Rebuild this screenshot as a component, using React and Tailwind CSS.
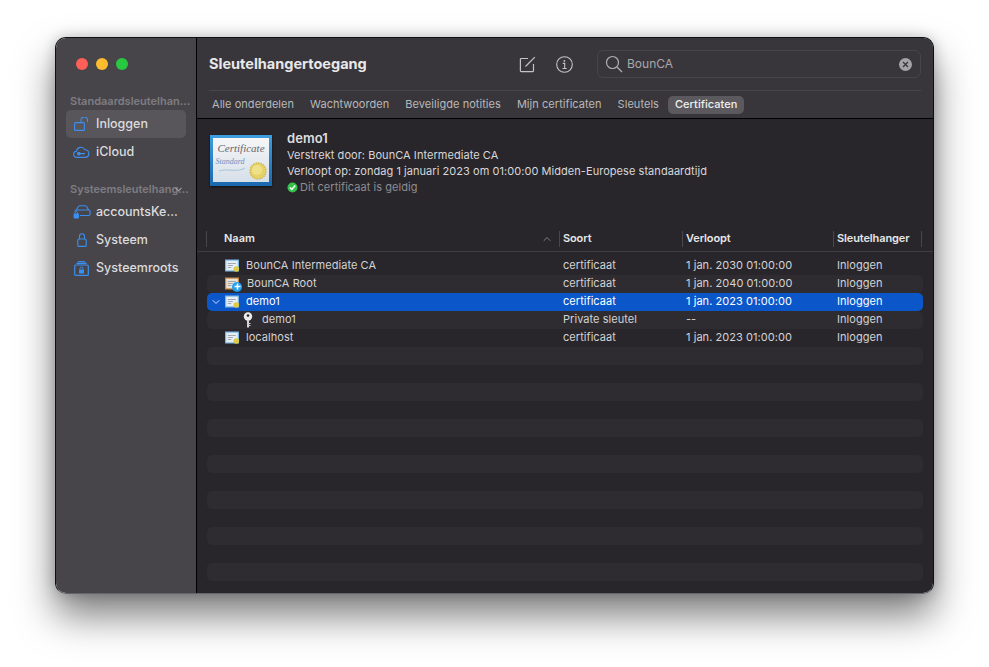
import React from 'react';
import { ChevronDown, ChevronUp } from 'lucide-react';

const tabs = ['Alle onderdelen', 'Wachtwoorden', 'Beveiligde notities', 'Mijn certificaten', 'Sleutels', 'Certificaten'];

const rows = [
  { name: 'BounCA Intermediate CA', kind: 'certificaat', expires: '1 jan. 2030 01:00:00', icon: 'cert' },
  { name: 'BounCA Root', kind: 'certificaat', expires: '1 jan. 2040 01:00:00', icon: 'root' },
  { name: 'demo1', kind: 'certificaat', expires: '1 jan. 2023 01:00:00', icon: 'cert', selected: true },
  { name: 'demo1', kind: 'Private sleutel', expires: '--', icon: 'key' },
  { name: 'localhost', kind: 'certificaat', expires: '1 jan. 2023 01:00:00', icon: 'cert' },
];

function OpenLockIcon() {
  return (
    <svg width="15" height="14" viewBox="0 0 15 14" fill="none" stroke="#3b8ff0" strokeWidth="1.1">
      <rect x="0.600" y="5.600" width="9.800" height="7.800" rx="1" />
      <path d="M7 5.600V3.200a3 3 0 0 1 6.500 0v2" />
    </svg>
  );
}

function CloudIcon() {
  return (
    <svg width="17" height="12" viewBox="0 0 17 12" fill="none" stroke="#3b8ff0" strokeWidth="1.1">
      <path d="M4 11.400a3.100 3.100 0 0 1-.5-6.200A4.400 4.400 0 0 1 11.800 3.700a3.900 3.900 0 0 1 1 7.700z" />
      <circle cx="5.800" cy="7.600" r="1.300" fill="#3b8ff0" />
      <path d="M7 7.600h5" />
    </svg>
  );
}

function CarLockIcon() {
  return (
    <svg width="18" height="14" viewBox="0 0 18 14" fill="none" stroke="#3b8ff0" strokeWidth="1.1">
      <path d="M3.500 5 5 1.900A2 2 0 0 1 6.800 0.700h5.400A2 2 0 0 1 14 1.900L15.500 5" />
      <path d="M7 10.500h8.500a1.600 1.600 0 0 0 1.600-1.600V6.600a1.600 1.600 0 0 0-1.600-1.600h-12a1.600 1.600 0 0 0-1.600 1.600" />
      <rect x="0.600" y="8.400" width="5.400" height="5" rx="1" fill="#3b8ff0" stroke="none" />
      <path d="M2 8.900V7.900a1.300 1.300 0 0 1 2.600 0v1" strokeWidth="0.900" />
    </svg>
  );
}

function LockIcon() {
  return (
    <svg width="10" height="14" viewBox="0 0 10 14" fill="none" stroke="#3b8ff0" strokeWidth="1.1">
      <rect x="0.800" y="6" width="8.400" height="7.400" rx="1" />
      <path d="M2.500 6V3.300a2.500 2.500 0 0 1 5 0V6" />
    </svg>
  );
}

function RootsIcon() {
  return (
    <svg width="15" height="15" viewBox="0 0 15 15" fill="none" stroke="#3b8ff0" strokeWidth="1.200">
      <rect x="0.700" y="4" width="13.600" height="10.400" rx="1" />
      <path d="M2.500 2.300h10" strokeWidth="1.500" />
      <path d="M4 0.600h7" strokeWidth="1" />
      <rect x="5" y="8.500" width="5" height="4" rx="0.600" fill="#3b8ff0" stroke="none" />
      <path d="M6 8.500V7.500a1.500 1.500 0 0 1 3 0v1" strokeWidth="0.900" />
    </svg>
  );
}

function SmallCert({ root }) {
  return (
    <svg width="15" height="14" viewBox="0 0 15 14">
      <rect x="0" y="0.500" width="14" height="12" fill={root ? '#c98a3e' : '#7bb6e2'} />
      <rect x="1.200" y="1.700" width="11.600" height="9.600" fill={root ? '#e8e2d8' : '#e6edf3'} />
      <path d="M2.800 4.500h8M2.800 6.500h5M2.800 8.500h3.500" stroke="#8b98a3" strokeWidth="0.800" />
      <circle cx="11.300" cy="10" r="2.800" fill="#dccc45" />
    </svg>
  );
}

function RowIcon({ type }) {
  if (type === 'key') {
    return (
      <svg width="10" height="16" viewBox="0 0 10 16">
        <circle cx="5" cy="4.500" r="4.200" fill="#ececec" />
        <circle cx="5" cy="3.600" r="1.300" fill="#2a282d" />
        <path d="M4 8h2v7.500H4zM6 11h1.500v1H6zM6 13h1.500v1H6z" fill="#d4d4d4" />
      </svg>
    );
  }
  return (
    <div className="relative h-[14px] w-[15px]">
      <SmallCert root={type === 'root'} />
      {type === 'root' && (
        <div className="absolute left-[7px] top-[5px] flex h-[10px] w-[10px] items-center justify-center rounded-full bg-[#1ea0f2]">
          <svg width="7" height="7" viewBox="0 0 7 7">
            <path d="M3.500 0.500v6M0.500 3.500h6" stroke="#fff" strokeWidth="1.600" />
          </svg>
        </div>
      )}
    </div>
  );
}

function BigCert() {
  return (
    <div className="mt-[5px] h-[51px] w-[62px] shrink-0 bg-gradient-to-b from-[#3d9ee0] to-[#1a68ae] px-[3px] pt-[3px] pb-[4px] shadow-[0_1px_2px_rgba(0,0,0,0.6)]">
      <svg width="56" height="44" viewBox="0 0 56 44" className="bg-gradient-to-b from-[#f6f6f7] to-[#d6dfe8]">
        <text x="28" y="14" textAnchor="middle" fontFamily="'Liberation Serif', serif" fontStyle="italic" fontSize="11" fill="#66666b">Certificate</text>
        <text x="17" y="26" textAnchor="middle" fontFamily="'Liberation Serif', serif" fontStyle="italic" fontSize="8" fill="#5f93c4">Standard</text>
        <path d="M6 33c8-3 18 2 26-3" stroke="#8fb3d4" strokeWidth="0.700" fill="none" />
        <circle cx="45" cy="33" r="8" fill="#e5d268" stroke="#cdb848" strokeWidth="1.400" strokeDasharray="1.500 1" />
        <circle cx="44" cy="32" r="5" fill="#efe08a" />
      </svg>
    </div>
  );
}

function SidebarItem({ icon, label, active }) {
  return (
    <div className={`flex h-[28px] items-center rounded-[5px] ${active ? 'bg-[#58565b]' : ''}`}>
      <div className="flex w-[30px] shrink-0 justify-center pl-[1px]">{icon}</div>
      <span className="text-[12.500px] font-medium text-[#dcdbdd]">{label}</span>
    </div>
  );
}

function HeaderCell({ label, className }) {
  return (
    <div className={`flex h-[16px] items-center border-l border-[#48474b] pl-[3px] text-[11px] font-semibold tracking-[-0.12px] text-[#e6e6e7] ${className}`}>
      {label}
    </div>
  );
}

function Row({ row, striped }) {
  const isKey = row.icon === 'key';
  return (
    <div className={`flex h-[18px] items-center rounded-[5px] pb-[1px] text-[11px] tracking-[0.05px] ${row.selected ? 'bg-[#0b57ca] text-white' : striped ? 'bg-[#2e2c31] text-[#d4d3d5]' : 'text-[#d4d3d5]'}`}>
      <div className="flex w-[18px] shrink-0 justify-center">
        {row.selected && <ChevronDown size={12} strokeWidth={2} className="text-[#cfe0f7]" />}
      </div>
      <div className={`flex w-[335px] shrink-0 items-center ${isKey ? 'pl-[18px]' : ''}`}>
        <div className={`flex shrink-0 ${isKey ? 'w-[19px]' : 'w-[21px]'}`}>
          <RowIcon type={row.icon} />
        </div>
        <span className={row.icon === 'root' ? 'pl-[1px]' : ''}>{row.name}</span>
      </div>
      <div className="w-[123px] shrink-0 pl-[3px]">{row.kind}</div>
      <div className="w-[151px] shrink-0 pl-[3px]">{row.expires}</div>
      <div className="pl-[3px]">Inloggen</div>
    </div>
  );
}

export default function App() {
  const stripes = Array.from({ length: 18 - rows.length });
  return (
    <div className="h-[667px] w-[989px] overflow-hidden bg-white pl-[55px] pt-[37px] font-['Inter','Liberation_Sans',sans-serif]">
      <div className="flex h-[557px] w-[879px] overflow-hidden rounded-[11px] border border-[#101012] border-b-[#666468] shadow-[0_22px_38px_rgba(0,0,0,0.5),0_0_14px_rgba(0,0,0,0.22)]">
        <aside className="flex w-[141px] shrink-0 flex-col border-r border-black bg-[#47454a] px-[10px] pt-[20px]">
          <div className="flex gap-[8px] pl-[10px]">
            <div className="h-[12px] w-[12px] rounded-full bg-[#fe5f57]" />
            <div className="h-[12px] w-[12px] rounded-full bg-[#febc2e]" />
            <div className="h-[12px] w-[12px] rounded-full bg-[#28c840]" />
          </div>
          <div className="mt-[23px] h-[16px] whitespace-nowrap pl-[4px] text-[11px] leading-[16px] font-semibold text-[#7f7d82]">Standaardsleutelhan...</div>
          <div className="mt-[1px] flex flex-col">
            <SidebarItem active icon={<OpenLockIcon />} label="Inloggen" />
            <SidebarItem icon={<CloudIcon />} label="iCloud" />
          </div>
          <div className="relative mt-[15px] h-[16px] whitespace-nowrap pl-[4px] text-[11px] leading-[16px] font-semibold text-[#7f7d82]">
            Systeemsleutelhang...
            <ChevronDown size={11} strokeWidth={2.200} className="absolute left-[107px] top-[3px] text-[#a3a1a6]" />
          </div>
          <div className="mt-[1px] flex flex-col">
            <SidebarItem icon={<CarLockIcon />} label="accountsKe..." />
            <SidebarItem icon={<LockIcon />} label="Systeem" />
            <SidebarItem icon={<RootsIcon />} label="Systeemroots" />
          </div>
        </aside>
        <main className="flex min-w-0 flex-1 flex-col bg-[#28262b]">
          <header className="flex h-[81px] shrink-0 flex-col border-b border-black bg-[#38363b] px-[12px]">
            <div className="flex h-[53px] shrink-0 items-center border-b border-[#48464b]">
              <h1 className="w-[310px] text-[14.500px] font-bold text-[#e8e8e9]">Sleutelhangertoegang</h1>
              <svg width="17" height="17" viewBox="0 0 17 17" fill="none" stroke="#c4c3c5" strokeWidth="1.200">
                <path d="M9 2.500H2.200a.8.800 0 0 0-.8.800v11.500a.8.800 0 0 0 .8.800h11.500a.8.800 0 0 0 .8-.800V8" />
                <path d="M6.500 10.500 15.800 1.200" />
              </svg>
              <svg width="17" height="17" viewBox="0 0 17 17" fill="none" stroke="#c4c3c5" strokeWidth="1.100" className="ml-[20px]">
                <circle cx="8.500" cy="8.500" r="7.800" />
                <path d="M6.800 7.400h1.900v5M6.500 12.500h4.200" />
                <circle cx="8.400" cy="4.900" r="0.900" fill="#c4c3c5" stroke="none" />
              </svg>
              <div className="ml-[24px] flex h-[28px] flex-1 items-center rounded-[6px] border border-[#47454a] pl-[7px] pr-[8px]">
                <svg width="18" height="18" viewBox="0 0 18 18" fill="none" stroke="#b0afb2" strokeWidth="1.200">
                  <circle cx="7.500" cy="7.500" r="6" />
                  <path d="M12 12l5 5" />
                </svg>
                <span className="ml-[4px] flex-1 text-[12px] text-[#a9a8ab]">BounCA</span>
                <div className="flex h-[13px] w-[13px] items-center justify-center rounded-full bg-[#a4a3a6]">
                  <svg width="7" height="7" viewBox="0 0 7 7">
                    <path d="M1 1l5 5M6 1L1 6" stroke="#38363b" strokeWidth="1.300" />
                  </svg>
                </div>
              </div>
            </div>
            <nav className="-ml-[4px] flex flex-1 items-center gap-[2px] text-[11px] tracking-[0.05px] text-[#b9b8ba]">
              {tabs.map((tab) => (
                <div
                  key={tab}
                  className={`flex h-[18px] items-center rounded-[5px] px-[7px] ${tab === 'Certificaten' ? 'bg-[#5b595e] font-medium text-[#f0f0f0]' : ''}`}
                >
                  {tab}
                </div>
              ))}
            </nav>
          </header>
          <section className="flex h-[107px] shrink-0 pt-[11px] pl-[13px]">
            <BigCert />
            <div className="ml-[15px] flex flex-col text-[11px] leading-[16px] tracking-[0.05px] text-[#d8d7d9]">
              <div className="text-[13px] leading-[17px] font-semibold text-[#dededf]">demo1</div>
              <div>Verstrekt door: BounCA Intermediate CA</div>
              <div>Verloopt op: zondag 1 januari 2023 om 01:00:00 Midden-Europese standaardtijd</div>
              <div className="flex items-center text-[#8e8d90]">
                <svg width="11" height="11" viewBox="0 0 11 11" className="mr-[2px]">
                  <circle cx="5.500" cy="5.500" r="5" fill="#35c24a" />
                  <path d="M2.800 5.500l2 2 3.400-4" stroke="#fff" strokeWidth="1.500" fill="none" />
                </svg>
                Dit certificaat is geldig
              </div>
            </div>
          </section>
          <div className="flex h-[26px] shrink-0 items-center border-b border-[#3f3d42] pl-[9px]">
            <div className="relative flex h-[16px] w-[353px] items-center border-l border-[#48474b] pl-[17px] text-[11px] font-semibold text-[#e6e6e7]">
              Naam
              <ChevronUp size={12} strokeWidth={1.800} className="absolute right-[6px] top-[2px] text-[#88878b]" />
            </div>
            <HeaderCell label="Soort" className="w-[123px]" />
            <HeaderCell label="Verloopt" className="w-[151px]" />
            <HeaderCell label="Sleutelhanger" className="w-[89px] border-r" />
          </div>
          <div className="mt-[5px] px-[10px]">
            {rows.map((row, i) => (
              <Row key={i} row={row} striped={i % 2 === 1} />
            ))}
            {stripes.map((_, i) => (
              <div key={i} className={`h-[18px] rounded-[5px] ${i % 2 === 0 ? 'bg-[#2e2c31]' : ''}`} />
            ))}
          </div>
        </main>
      </div>
    </div>
  );
}
